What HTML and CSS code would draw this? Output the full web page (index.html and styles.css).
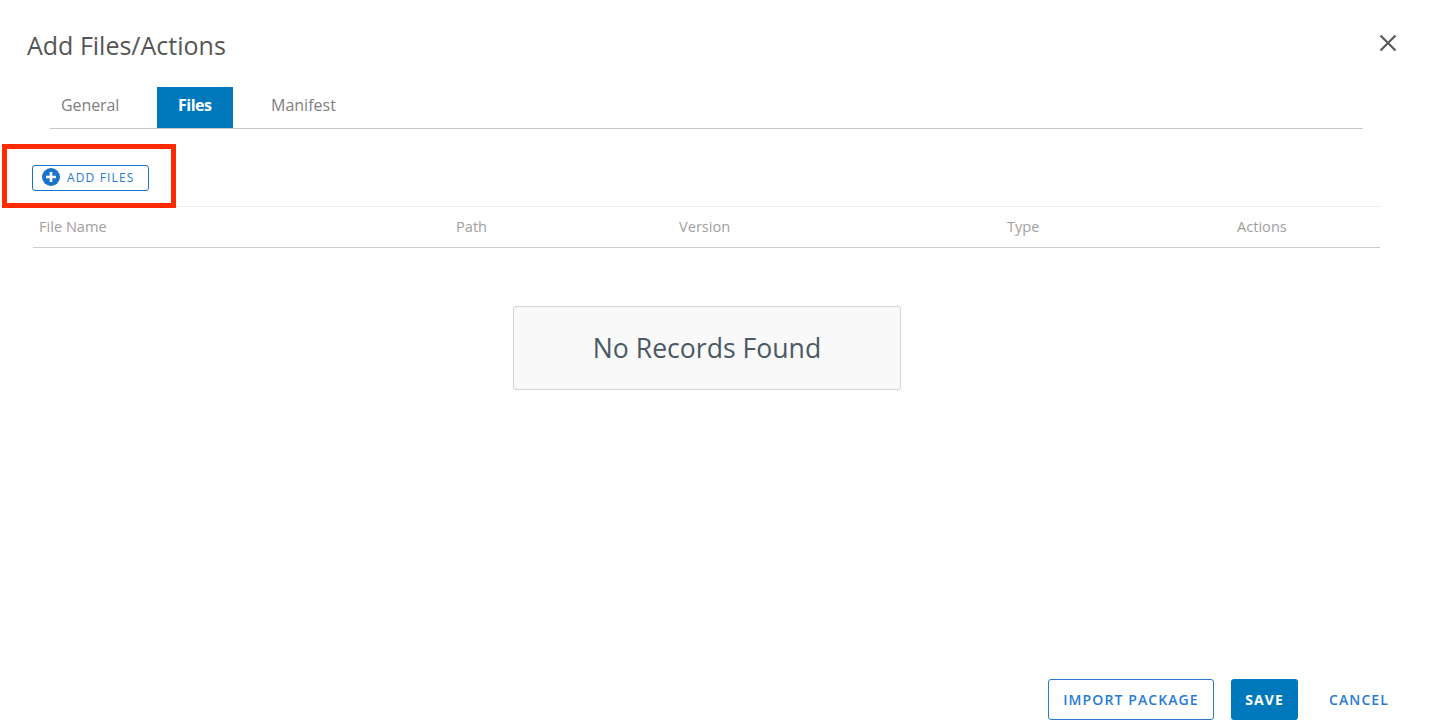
FILE: index.html
```html
<!DOCTYPE html>
<html lang="en">
<head>
    <link rel="stylesheet" href="styles.css">
</head>
<body>
    <div class="dialog">
        <div class="dialog-header">
            <h1>Add Files/Actions</h1>
            <button class="close" aria-label="Close">
                <svg width="18" height="18" viewBox="0 0 18 18"><path d="M1.5 1.5 L16.5 16.5 M16.5 1.5 L1.5 16.5" stroke="#5a5a5a" stroke-width="2.2" fill="none"/></svg>
            </button>
        </div>

        <div class="tabs">
            <div class="tab">General</div>
            <div class="tab active">Files</div>
            <div class="tab">Manifest</div>
        </div>

        <div class="toolbar">
            <button class="add-files">
                <svg width="18" height="18" viewBox="0 0 18 18"><circle cx="9" cy="9" r="9" fill="#1773cc"/><path d="M9 4 V14 M4 9 H14" stroke="#fff" stroke-width="2.6"/></svg>
                <span>ADD FILES</span>
            </button>
        </div>

        <div class="table-head">
            <div>File Name</div>
            <div>Path</div>
            <div>Version</div>
            <div>Type</div>
            <div>Actions</div>
        </div>

        <div class="empty">No Records Found</div>

        <div class="footer">
            <button class="btn btn-outline">IMPORT PACKAGE</button>
            <button class="btn btn-primary">SAVE</button>
            <button class="btn btn-link">CANCEL</button>
        </div>
    </div>

    <!-- annotation drawn on top of the screenshot -->
    <div class="highlight"></div>
</body>
</html>
```

FILE: styles.css
```css
body {
    font-family: 'Open Sans', sans-serif;
    margin: 0;
    background: white;
    color: #555;
    overflow: hidden;
}

button {
    font-family: inherit;
    cursor: pointer;
}

.dialog {
    height: 721px;
    box-sizing: border-box;
    display: flex;
    flex-direction: column;
    padding: 0 40px 1px 33px;
}

.dialog-header {
    height: 87px;
    margin-left: -6px;
    margin-right: -8px;
    display: flex;
    justify-content: space-between;
    align-items: flex-start;
}

h1 {
    font-size: 25px;
    font-weight: 400;
    line-height: 32px;
    margin: 29px 0 0;
    color: #555;
}

.close {
    border: none;
    background: none;
    padding: 0;
    margin-top: 34px;
    height: 18px;
}

.tabs {
    display: flex;
    margin-left: 17px;
    width: 1313px;
    border-bottom: 1px solid #c8c8c8;
    height: 41px;
}

.tab {
    padding: 0 38px;
    font-size: 16px;
    line-height: 37px;
    color: #808080;
}

.tab:first-child {
    width: 58px;
    padding: 0 38px 0 11px;
    box-sizing: content-box;
    letter-spacing: -0.1px;
}

.tab.active {
    width: 33px;
    background: #0079bc;
    color: white;
    font-weight: 700;
    padding: 0 22px 0 21px;
    letter-spacing: -0.5px;
}

.toolbar {
    height: 77px;
    padding-top: 36px;
    box-sizing: border-box;
    margin-left: -1px;
}

.add-files {
    width: 117px;
    height: 26px;
    display: flex;
    align-items: center;
    gap: 7px;
    padding: 0 0 0 9px;
    border: 1px solid #1773cc;
    border-radius: 3px;
    background: white;
    color: #2a7bd0;
    font-size: 12px;
    letter-spacing: 1.15px;
}

.add-files svg {
    margin-top: -2px;
}

.add-files span {
    margin-top: -2px;
}

.table-head {
    display: grid;
    grid-template-columns: 417px 223px 328px 230px 1fr;
    height: 37px;
    padding: 0 0 3px 6px;
    align-items: center;
    border-top: 1px solid #eee;
    border-bottom: 1px solid #ccc;
    margin-right: 9px;
    font-size: 14.6px;
    color: #a0a0a0;
}

.empty {
    width: 386px;
    height: 82px;
    margin: 58px 0 0 480px;
    border: 1px solid #d4d4d4;
    border-radius: 3px;
    background: #f9f9f9;
    color: #4a5965;
    font-size: 26.6px;
    display: flex;
    align-items: center;
    justify-content: center;
}

.footer {
    margin-top: auto;
    display: flex;
    justify-content: flex-end;
    gap: 17px;
}

.btn {
    height: 41px;
    font-size: 14px;
    font-weight: 600;
    letter-spacing: 1.1px;
    border-radius: 3px;
    padding: 0;
}

.btn-outline {
    width: 166px;
    background: white;
    border: 1px solid #2a7bd0;
    color: #2a7bd0;
}

.btn-primary {
    width: 67px;
    background: #0079bc;
    border: none;
    color: white;
    font-weight: 700;
}

.btn-link {
    width: 60px;
    margin-left: 14px;
    background: none;
    border: none;
    color: #2a7bd0;
}

.highlight {
    position: absolute;
    left: 2px;
    top: 144px;
    width: 164px;
    height: 54px;
    border: 5px solid #ff2a00;
}
```
